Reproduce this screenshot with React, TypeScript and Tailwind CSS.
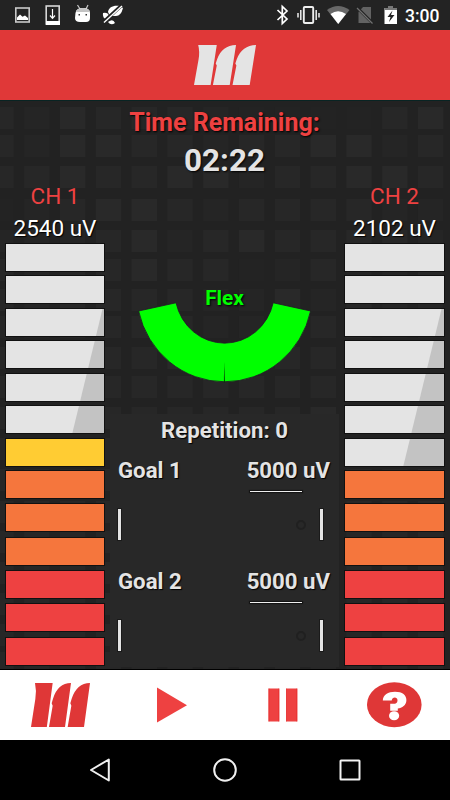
import React from "react";

const TILE_ROWS = [
  { y: 7, levels: "2132221000023" },
  { y: 35, levels: "2133221223312" },
  { y: 66, levels: "2232233122332" },
  { y: 99, levels: "0123321222211" },
  { y: 130, levels: "1112312322221" },
  { y: 159, levels: "2122322012112" },
  { y: 189, levels: "2122221131211" },
  { y: 216, levels: "1122221122211" },
  { y: 247, levels: "2122232122311" },
  { y: 276, levels: "2122222222211" },
  { y: 307, levels: "2122222223211" },
  { y: 338, levels: "2222222222222" },
  { y: 369, levels: "2222222222222" },
  { y: 401, levels: "2222222222222" },
  { y: 431, levels: "2222222222222" },
  { y: 462, levels: "2222222222222" },
  { y: 493, levels: "2222222222222" },
  { y: 524, levels: "2222222222222" },
  { y: 552, levels: "2222222222222" },
];
const TILE_FILL = ["#232323", "#252525", "#272727", "#292929"];

function Tiles() {
  return (
    <svg className="absolute inset-0" width="450" height="570" aria-hidden="true">
      {TILE_ROWS.map((row) =>
        row.levels.split("").map((l, i) => (
          <rect key={`${row.y}-${i}`} x={-11.7 + i * 35.8} y={row.y} width="25.5" height="22" fill={TILE_FILL[Number(l)]} />
        )),
      )}
    </svg>
  );
}

function Logo({ className }: { className: string }) {
  return (
    <svg className={className} viewBox="0 0 177 132" preserveAspectRatio="none">
      <path
        fill="currentColor"
        d="M12 0H65L47.5 132H0L13 48Q17 22 12 0ZM120 0L102 132H54L65 68L62 61L66 47Q80 1 120 0ZM177 0L159 132H110L121 68L118 61L122 47Q137 1 177 0Z"
      />
    </svg>
  );
}

function StatusBar() {
  return (
    <div className="flex h-[30px] shrink-0 bg-[#232323] text-[#ececec]">
      <svg width="450" height="30" viewBox="0 0 450 30">
        <rect x="15.8" y="8" width="13.4" height="14" fill="none" stroke="#c9c9c9" strokeWidth="1.6" />
        <path d="M17 20V17.5L20 14.5L22.5 16.8L25 15.5L28 18V20Z" fill="#fff" />
        <rect x="46.2" y="6" width="13" height="18" fill="none" stroke="#d7d7d7" strokeWidth="1.6" />
        <path d="M46 21H60V25H46Z" fill="#fff" />
        <path d="M52.5 9V18M50 15.5L52.5 18.3L55 15.5" fill="none" stroke="#fff" strokeWidth="1.2" />
        <path d="M77.5 5L80 9M88 5L86 9" stroke="#c8c8c8" strokeWidth="1.2" />
        <path d="M75.5 13Q76 8 83 8Q90 8 90 13V18Q90 22 86 22H80Q75 22 75 18Z" fill="#fff" />
        <path d="M76 12Q77 8 83 8Q89 8 90 12Z" fill="#c4c4c4" />
        <path d="M78.5 14H80V15.5H78.5ZM85.5 14H87V15.5H85.5Z" fill="#333" />
        <path d="M108 12C109 7 113 5 120 6L123 8Q121 16 116 16L110 16ZM103 13Q108 12 109 16L107 20Q102 18 103 13ZM108 22Q113 18 115 23Q111 26 108 22Z" fill="#fff" />
        <path d="M103.5 22L121.5 5.5" stroke="#232323" strokeWidth="3.6" />
        <path d="M104 22.5L122 6" stroke="#fff" strokeWidth="1.4" />
        <path d="M277.5 10L287 19L282.3 23.5V6.5L287 11L277.5 20" fill="none" stroke="#fff" strokeWidth="1.7" />
        <rect x="303.8" y="7" width="9.4" height="16" rx="1" fill="none" stroke="#eee" strokeWidth="1.9" />
        <path d="M300.8 10V20M316.2 10V20M298 13V17.5M319 13V17.5" stroke="#eee" strokeWidth="1.5" />
        <path d="M327 10Q338 2 349.5 10L338.2 24Z" fill="#686868" />
        <path d="M330.5 14Q338 8.5 346 14L338.2 24Z" fill="#fff" />
        <path d="M363 7H371V23H358.5V12Z" fill="#626262" />
        <path d="M356.5 7L373 23.5" stroke="#232323" strokeWidth="3" />
        <path d="M357 8L372.5 23.5" stroke="#707070" strokeWidth="1.3" />
        <path d="M384.5 8H388V6H393V8H397V24H384.5Z" fill="#fff" />
        <path d="M384.5 8H388V6H393V8H397V10H384.5Z" fill="#777" />
        <path d="M392.5 10.5L387.5 17H390.5L389 22L394.5 15H391Z" fill="#222" />
        <text x="405" y="22" fontSize="18.2" fontWeight="500" fontFamily="Roboto, sans-serif" fill="#fff" textLength="34.5" lengthAdjust="spacingAndGlyphs">3:00</text>
      </svg>
    </div>
  );
}

const GREY = "bg-[#e4e4e4]";
const YELLOW = "bg-[#ffcc33]";
const ORANGE = "bg-[#f5763d]";
const RED = "bg-[#ee4141]";

const GAPS = ["mt-0", "mt-[5px]", "mt-[6px]", "mt-[5px]", "mt-[6px]", "mt-[5px]", "mt-[6px]", "mt-[5px]", "mt-[6px]", "mt-[7px]", "mt-[6px]", "mt-[6px]", "mt-[7px]"];
const BAR_TOPS = [0, 32, 65, 97, 130, 162, 195, 227, 260, 294, 327, 360, 394];

function Bar({ index, color }: { index: number; color: string }) {
  const edge = (y: number) => 96.5 - (y - 65) * 0.243;
  const top = edge(BAR_TOPS[index]);
  const bottom = edge(BAR_TOPS[index] + 27);
  const shaded = color === GREY && index > 1;
  return (
    <div className={`${GAPS[index]} ${color} h-[27px] shrink-0 shadow-[0_0_0_1px_#111111]`}>
      {shaded && (
        <div
          className="h-full w-full bg-[#c3c3c3]"
          style={{ clipPath: `polygon(${top}px 0, 100% 0, 100% 100%, ${bottom}px 100%)` }}
        />
      )}
    </div>
  );
}

function Channel({ name, value, greys, width }: { name: string; value: string; greys: number; width: string }) {
  const colors = Array.from({ length: 13 }, (_, i) => (i < greys ? GREY : i === 6 ? YELLOW : i < 10 ? ORANGE : RED));
  return (
    <div className={`relative flex shrink-0 flex-col ${width}`}>
      <div className="mt-[80px] h-8 text-center text-[22.5px] leading-8 text-[#ee4141]">{name}</div>
      <div className="h-8 whitespace-nowrap text-center text-[22.5px] leading-8 text-white [text-shadow:1px_1px_1px_#000]">{value}</div>
      {colors.map((c, i) => (
        <Bar key={i} index={i} color={c} />
      ))}
    </div>
  );
}

function Goal({ name }: { name: string }) {
  return (
    <div className="h-[111px] pl-[14px] pr-[15px]">
      <div className="flex h-8 items-center justify-between text-[22.2px] font-bold text-[#e4e4e4] [text-shadow:1px_1px_1px_#000]">
        <span>{name}</span>
        <span>5000 uV</span>
      </div>
      <div className="ml-[132px] mt-[4px] h-px w-[52px] bg-[#eeeeee] shadow-[0_0_1px_1px_#111]" />
      <div className="mt-[17px] flex h-[31px] items-center justify-between pr-[7px]">
        <div className="h-[31px] w-[3px] bg-[#e4e4e4] shadow-[0_0_0_1px_#1a1a1a]" />
        <div className="ml-auto mr-[14px] size-[10px] rounded-full border-2 border-[#202020]" />
        <div className="h-[31px] w-[3px] bg-[#e4e4e4] shadow-[0_0_0_1px_#1a1a1a]" />
      </div>
    </div>
  );
}

export default function App() {
  return (
    <div className="flex h-[800px] w-[450px] flex-col overflow-hidden bg-black font-[Roboto,sans-serif]">
      <StatusBar />
      <header className="flex h-[70px] shrink-0 justify-center bg-[#e03838] pt-[15px]">
        <Logo className="h-[40px] w-[62px] text-[#e4e4e4]" />
      </header>
      <main className="relative flex h-[570px] shrink-0 justify-between overflow-hidden border-b border-black bg-[#222222] px-[6px] shadow-[inset_0_1px_0_#082423]">
        <Tiles />
        <Channel name="CH 1" value="2540 uV" greys={6} width="w-[98px]" />
        <section className="relative flex w-[241px] shrink-0 flex-col">
          <div className="mt-[7px] h-8 whitespace-nowrap text-center text-[25px] font-bold leading-8 text-[#ee4141] [text-shadow:1px_1px_2px_#000]">
            Time Remaining:
          </div>
          <div className="mt-[2px] h-10 text-center text-[31.4px] font-bold leading-10 text-[#e4e4e4] [text-shadow:1px_1px_2px_#000]">02:22</div>
          <div className="mt-[103px] h-7 text-center text-[20.8px] font-bold leading-7 text-[#00ff00] [text-shadow:1px_1px_2px_#000]">Flex</div>
          <svg className="mt-[-12px] shrink-0" width="241" height="84" viewBox="104 300 241 84">
            <path
              d="M138.6 311A88.1 90.4 0 0 0 310.6 311L273.2 302.8A49.9 52.2 0 0 1 176 302.8Z"
              fill="#00ff00"
              stroke="#251228"
              strokeWidth="0.8"
            />
            <path d="M224.1 362L223.9 382.5H225Z" fill="#063c06" />
          </svg>
          <div className="mx-[6px] mt-[30px] h-[253px] shrink-0 bg-[#282828]">
            <div className="h-[41px] text-center text-[22.2px] font-bold leading-[33px] text-[#e4e4e4] [text-shadow:1px_1px_1px_#000]">
              Repetition: 0
            </div>
            <div className="-mx-[6px]">
              <Goal name="Goal 1" />
              <Goal name="Goal 2" />
            </div>
          </div>
        </section>
        <Channel name="CH 2" value="2102 uV" greys={7} width="w-[99px]" />
      </main>
      <nav className="flex h-[70px] shrink-0 items-start bg-white">
        <Logo className="ml-[31px] mt-[13px] h-[44px] w-[59px] text-[#df3737]" />
        <svg className="ml-[67px] mt-[17px]" width="30" height="36" viewBox="0 0 30 36">
          <path d="M0 .5L30 18.2L0 35.5Z" fill="#ee4141" />
        </svg>
        <svg className="ml-[81px] mt-[18px]" width="30" height="34" viewBox="0 0 30 34">
          <path d="M.8 .5H11V33.5H.8ZM18.5 .5H29V33.5H18.5Z" fill="#ee4141" />
          <path d="M.8 .5V33.5M11 .5V33.5M18.5 .5V33.5M29 .5V33.5" stroke="#e52424" strokeWidth="0.8" />
        </svg>
        <svg className="ml-[69px] mt-[12px]" width="55" height="46" viewBox="0 0 55 46">
          <ellipse cx="27.3" cy="22.7" rx="27.3" ry="22.5" fill="#df3737" />
          <path
            d="M15.8 18.4C16 12.7 21 9.7 28 9.7C35.5 9.7 39.4 13 39.4 18C39.4 23.5 35 25.7 30.8 26.6V28.8H23.2V21.8H26.3C29 21.8 30.5 20.8 30.5 18.2C30.5 14.5 25 14.5 24.7 18.4Z"
            fill="#fff"
          />
          <ellipse cx="27.1" cy="33.8" rx="5.1" ry="4.5" fill="#fff" />
        </svg>
      </nav>
      <footer className="flex h-[60px] shrink-0 items-center bg-black text-[#f0f0f0]">
        <svg width="450" height="60" viewBox="0 0 450 60" fill="none" stroke="currentColor" strokeWidth="2" strokeLinejoin="round">
          <path d="M108.8 19.5V40.5L91 30Z" />
          <circle cx="225" cy="30" r="10.8" />
          <rect x="340.5" y="20.5" width="19" height="19" rx="0.5" />
        </svg>
      </footer>
    </div>
  );
}
